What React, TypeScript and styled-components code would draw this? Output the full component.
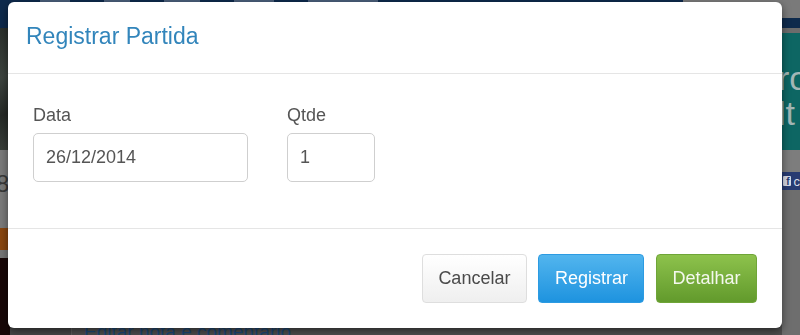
import React from "react";
import styled, { createGlobalStyle } from "styled-components";

const GlobalStyle = createGlobalStyle`
  html, body { margin: 0; padding: 0; }
  body {
    font-family: "Liberation Sans", Arial, Helvetica, sans-serif;
    background: #505050;
    overflow: hidden;
  }
  * { box-sizing: border-box; }
`;

/* ---------- dimmed page behind the modal ---------- */

const Page = styled.div`
  width: 800px;
  height: 335px;
  display: flex;
  flex-direction: column;
  background: #505050;
  overflow: hidden;
`;

const NavBar = styled.div`
  height: 28px;
  flex: none;
  display: flex;
  align-items: flex-start;
  background: #0e2a4c;
`;

const NavMenu = styled.div`
  flex: 1;
  display: flex;
  gap: 34px;
  padding: 0 0 0 40px;
  height: 3px;
  overflow: hidden;
`;

const NavItem = styled.span<{ w: number }>`
  display: block;
  width: ${(p) => p.w}px;
  height: 2px;
  background: #4a5f7a;
`;

const SearchBox = styled.div`
  width: 117px;
  height: 18px;
  background: #7a7a7a;
`;

const Main = styled.div`
  flex: 1;
  display: flex;
`;

const LeftRail = styled.div`
  width: 10px;
  display: flex;
  flex-direction: column;
`;

const Block = styled.div<{ h?: number; bg: string }>`
  height: ${(p) => (p.h ? `${p.h}px` : "auto")};
  flex: ${(p) => (p.h ? "none" : "1")};
  background: ${(p) => p.bg};
  overflow: hidden;
`;

const Photo = styled.div`
  height: 122px;
  background: linear-gradient(160deg, #2b302c 0%, #3d443f 40%, #262a27 70%, #3a403b 100%);
`;

const Digit = styled.span`
  display: block;
  margin: 22px 0 0 -4px;
  font-size: 24px;
  color: #3a3a3a;
  line-height: 1;
`;

const CenterArea = styled.div`
  flex: 1;
  display: flex;
  background: #4f4f4f;
`;

const SideCell = styled.div`
  width: 62px;
  background: #474747;
  border-right: 1px solid #5e5e5e;
`;

const ContentCell = styled.div`
  flex: 1;
  padding: 293px 0 0 12px;
`;

const EditLink = styled.span`
  font-size: 19px;
  color: #1d4876;
  text-decoration: underline;
`;

const RightRail = styled.div`
  width: 18px;
  display: flex;
  flex-direction: column;
  background: #6f6f6f;
`;

const Banner = styled.div`
  height: 117px;
  background: #0d6663;
  padding: 28px 0 0 0;
  overflow: hidden;
`;

const BannerText = styled.div`
  margin-left: -4px;
  font-size: 34px;
  line-height: 35px;
  color: #a3b7b6;
  white-space: nowrap;
`;

const FbBar = styled.div`
  height: 18px;
  display: flex;
  align-items: center;
  gap: 3px;
  padding-left: 1px;
  background: #283b72;
  overflow: hidden;
`;

const FbIcon = styled.span`
  width: 8px;
  height: 10px;
  background: #d8dce8;
  border-radius: 1px;
  font-size: 10px;
  font-weight: bold;
  color: #283b72;
  line-height: 11px;
  text-align: right;
  padding-right: 1px;
`;

const FbText = styled.span`
  font-size: 13px;
  color: #d8dce8;
`;

/* ---------- modal ---------- */

const Overlay = styled.div`
  position: fixed;
  inset: 0;
  padding: 2px 0 0 8px;
`;

const Modal = styled.div`
  width: 774px;
  background: #fff;
  border-radius: 6px;
  box-shadow: 0 3px 9px rgba(0, 0, 0, 0.5);
`;

const Header = styled.div`
  padding: 22px 18px 24px;
  border-bottom: 1px solid #e5e5e5;
`;

const Title = styled.h4`
  margin: 0;
  font-size: 23px;
  line-height: 25px;
  font-weight: normal;
  color: #3285bb;
`;

const Body = styled.div`
  padding: 29px 25px 46px;
  display: flex;
  gap: 39px;
`;

const Field = styled.div<{ w: number }>`
  width: ${(p) => p.w}px;
`;

const Label = styled.label`
  display: block;
  font-size: 18px;
  line-height: 24px;
  color: #555;
  margin-bottom: 6px;
`;

const Input = styled.input`
  display: block;
  width: 100%;
  height: 49px;
  padding: 0 12px;
  font-family: "Liberation Sans", Arial, sans-serif;
  font-size: 18px;
  color: #555;
  background: #fff;
  border: 1px solid #cfcfcf;
  border-radius: 5px;
  outline: none;
`;

const Footer = styled.div`
  border-top: 1px solid #e5e5e5;
  padding: 25px 25px 25px;
  display: flex;
  justify-content: flex-end;
  gap: 11.5px;
`;

type Variant = "default" | "primary" | "success";

const variants: Record<Variant, string> = {
  default: `
    background: linear-gradient(#ffffff, #efefef);
    border-color: #dedede;
    color: #4a4a4a;
  `,
  primary: `
    background: linear-gradient(#52b5ee, #1e93df);
    border-color: #2c9be2;
    color: #fff;
  `,
  success: `
    background: linear-gradient(#8dc24c, #629a2c);
    border-color: #6fa538;
    color: #f4f8ee;
  `,
};

const Button = styled.button<{ variant: Variant }>`
  height: 49px;
  padding: 0 15.5px;
  border: 1px solid transparent;
  border-radius: 4px;
  font-family: "Liberation Sans", Arial, sans-serif;
  font-size: 18px;
  cursor: pointer;
  ${(p) => variants[p.variant]}
`;

export default function App() {
  return (
    <>
      <GlobalStyle />
      <Page>
        <NavBar>
          <NavMenu>
            <NavItem w={30} />
            <NavItem w={26} />
            <NavItem w={36} />
            <NavItem w={40} />
            <NavItem w={70} />
          </NavMenu>
          <SearchBox />
        </NavBar>
        <Main>
          <LeftRail>
            <Photo />
            <Block h={78} bg="#7b7b7b">
              <Digit>8</Digit>
            </Block>
            <Block h={22} bg="#8a4710" />
            <Block h={8} bg="#767676" />
            <Block bg="#180707" />
          </LeftRail>
          <CenterArea>
            <SideCell />
            <ContentCell>
              <EditLink>Editar nota e comentário</EditLink>
            </ContentCell>
          </CenterArea>
          <RightRail>
            <Block h={5} bg="#6c6c6c" />
            <Banner>
              <BannerText>ro</BannerText>
              <BannerText>lt</BannerText>
            </Banner>
            <Block h={22} bg="#7d7d7d" />
            <FbBar>
              <FbIcon>f</FbIcon>
              <FbText>c</FbText>
            </FbBar>
            <Block bg="#6e6e6e" />
          </RightRail>
        </Main>
      </Page>
      <Overlay>
        <Modal>
          <Header>
            <Title>Registrar Partida</Title>
          </Header>
          <Body>
            <Field w={215}>
              <Label>Data</Label>
              <Input defaultValue="26/12/2014" />
            </Field>
            <Field w={88}>
              <Label>Qtde</Label>
              <Input defaultValue="1" />
            </Field>
          </Body>
          <Footer>
            <Button variant="default">Cancelar</Button>
            <Button variant="primary">Registrar</Button>
            <Button variant="success">Detalhar</Button>
          </Footer>
        </Modal>
      </Overlay>
    </>
  );
}
